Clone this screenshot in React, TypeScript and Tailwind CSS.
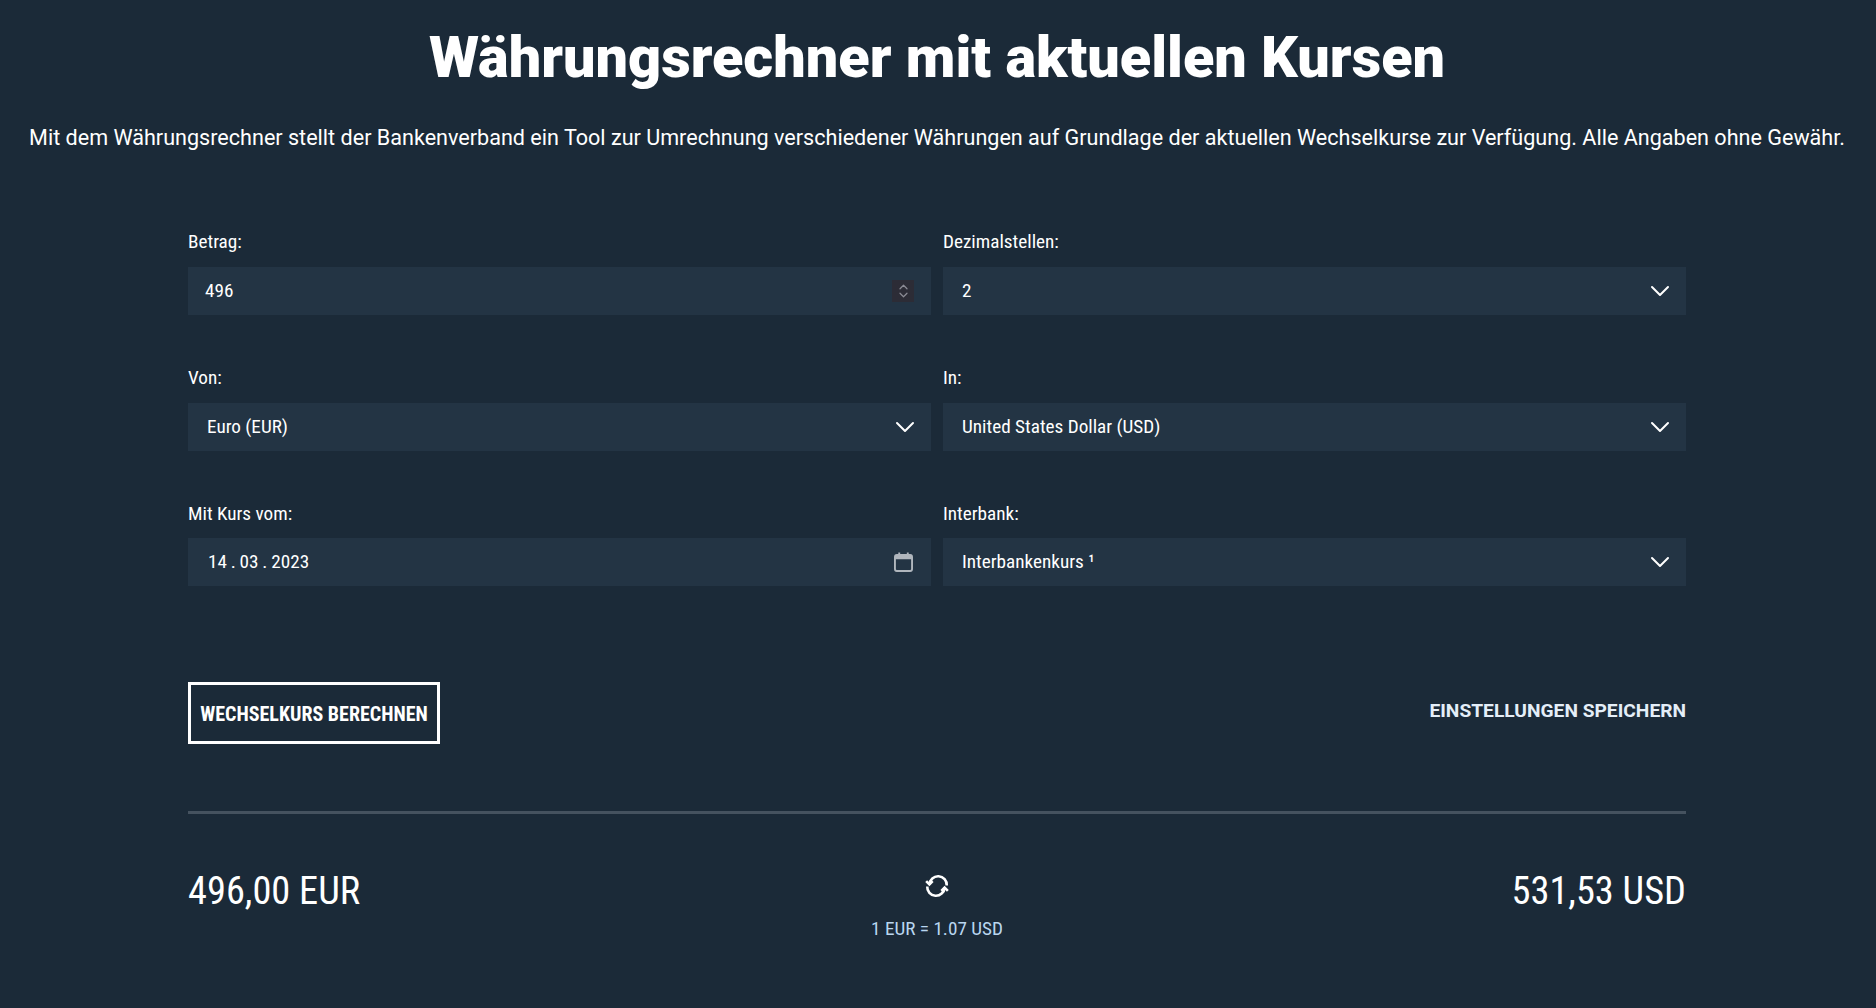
import type { ReactNode } from 'react';
import { ChevronDown, ChevronUp } from 'lucide-react';

const condensed = "font-['Roboto_Condensed','Roboto','Liberation_Sans',sans-serif] [font-stretch:75%]";

function CalendarIcon() {
  return (
    <svg viewBox="0 0 20 20" className="h-[20px] w-[19px] text-[#b0b6bd]" fill="none" stroke="currentColor" preserveAspectRatio="none">
      <rect x="1" y="3" width="18" height="16" rx="2" strokeWidth="2" />
      <path d="M1 5.5h18" strokeWidth="3.5" />
      <path d="M5.5 0.5v3M14.5 0.5v3" strokeWidth="2" />
    </svg>
  );
}

function SyncIcon() {
  return (
    <svg viewBox="0 0 24 24" className="h-[26px] w-[26px]" fill="none" stroke="currentColor" strokeWidth="2.4">
      <path d="M5 10.5A8 8 0 0 1 21 11.5" />
      <path d="M2 7.5l3 3 3-3" />
      <path d="M19 13.5A8 8 0 0 1 3 12.5" />
      <path d="M16 16.5l3-3 3 3" />
    </svg>
  );
}

function Field({ label, value, pad = 'pl-[19px]', pr = 'pr-[10px]', icon }: { label: string; value: string; pad?: string; pr?: string; icon?: ReactNode }) {
  return (
    <div className="flex flex-col">
      <label className="h-[35.7px] text-[19.2px] leading-[22px] text-white">{label}</label>
      <div className={`flex h-[48px] items-center justify-between bg-[#233444] text-[19.2px] text-white ${pad} ${pr}`}>
        <span className="pt-[1px]">{value}</span>
        {icon ?? <ChevronDown className="h-[32px] w-[32px] text-white" strokeWidth={1.5} />}
      </div>
    </div>
  );
}

export default function App() {
  return (
    <div className={`min-h-[1008px] bg-[#1b2a38] pr-[2px] text-white ${condensed}`}>
      <h1 className="pt-[26px] text-center font-['Roboto'] text-[57.6px] font-black leading-[64px] [font-stretch:100%]">Währungsrechner mit aktuellen Kursen</h1>
      <p className="mt-[33px] text-center font-['Roboto'] text-[21.58px] leading-[30px] [font-stretch:100%]">
        Mit dem Währungsrechner stellt der Bankenverband ein Tool zur Umrechnung verschiedener Währungen auf Grundlage der aktuellen Wechselkurse zur Verfügung. Alle Angaben ohne Gewähr.
      </p>
      <div className="mx-auto mt-[78.4px] w-[1498px]">
        <div className="grid grid-cols-2 gap-x-3 gap-y-[51.9px]">
          <Field
            label="Betrag:"
            value="496"
            pad="pl-[17px]"
            pr="pr-[17px]"
            icon={
              <span className="flex h-[22px] w-[22px] flex-col items-center justify-center bg-[#2c2c36] text-[#8b8b95]">
                <ChevronUp className="-mb-[3px] h-[17px] w-[17px]" strokeWidth={2.1} />
                <ChevronDown className="-mt-[3px] h-[17px] w-[17px]" strokeWidth={2.1} />
              </span>
            }
          />
          <Field label="Dezimalstellen:" value="2" />
          <Field label="Von:" value="Euro (EUR)" />
          <Field label="In:" value="United States Dollar (USD)" />
          <Field label="Mit Kurs vom:" value="14 . 03 . 2023" pad="pl-[20px] [word-spacing:-0.6px]" pr="pr-[18px]" icon={<CalendarIcon />} />
          <Field label="Interbank:" value="Interbankenkurs ¹" />
        </div>
        <div className="mt-[95.5px] flex items-start justify-between">
          <button className="flex h-[62.4px] w-[252px] items-center justify-center border-[3px] border-white pt-[2px] text-[20px] font-bold">
            WECHSELKURS BERECHNEN
          </button>
          <button className="mt-[17px] font-['Roboto'] text-[19.2px] font-bold leading-[24px] text-[#e4eef8] [font-stretch:100%]">
            EINSTELLUNGEN SPEICHERN
          </button>
        </div>
        <div className="mt-[67px] h-[3px] bg-[#45525f]" />
        <div className="mt-[47px] grid grid-cols-3 items-start">
          <div className="pt-[7px] text-[38.4px] leading-[46px]">496,00 EUR</div>
          <div className="flex flex-col items-center pt-[12px]">
            <SyncIcon />
            <div className="mt-[18px] text-[19.2px] leading-[24px] text-[#b9d6f0]">1 EUR = 1.07 USD</div>
          </div>
          <div className="pt-[7px] text-right text-[38.4px] leading-[46px]">531,53 USD</div>
        </div>
      </div>
    </div>
  );
}
